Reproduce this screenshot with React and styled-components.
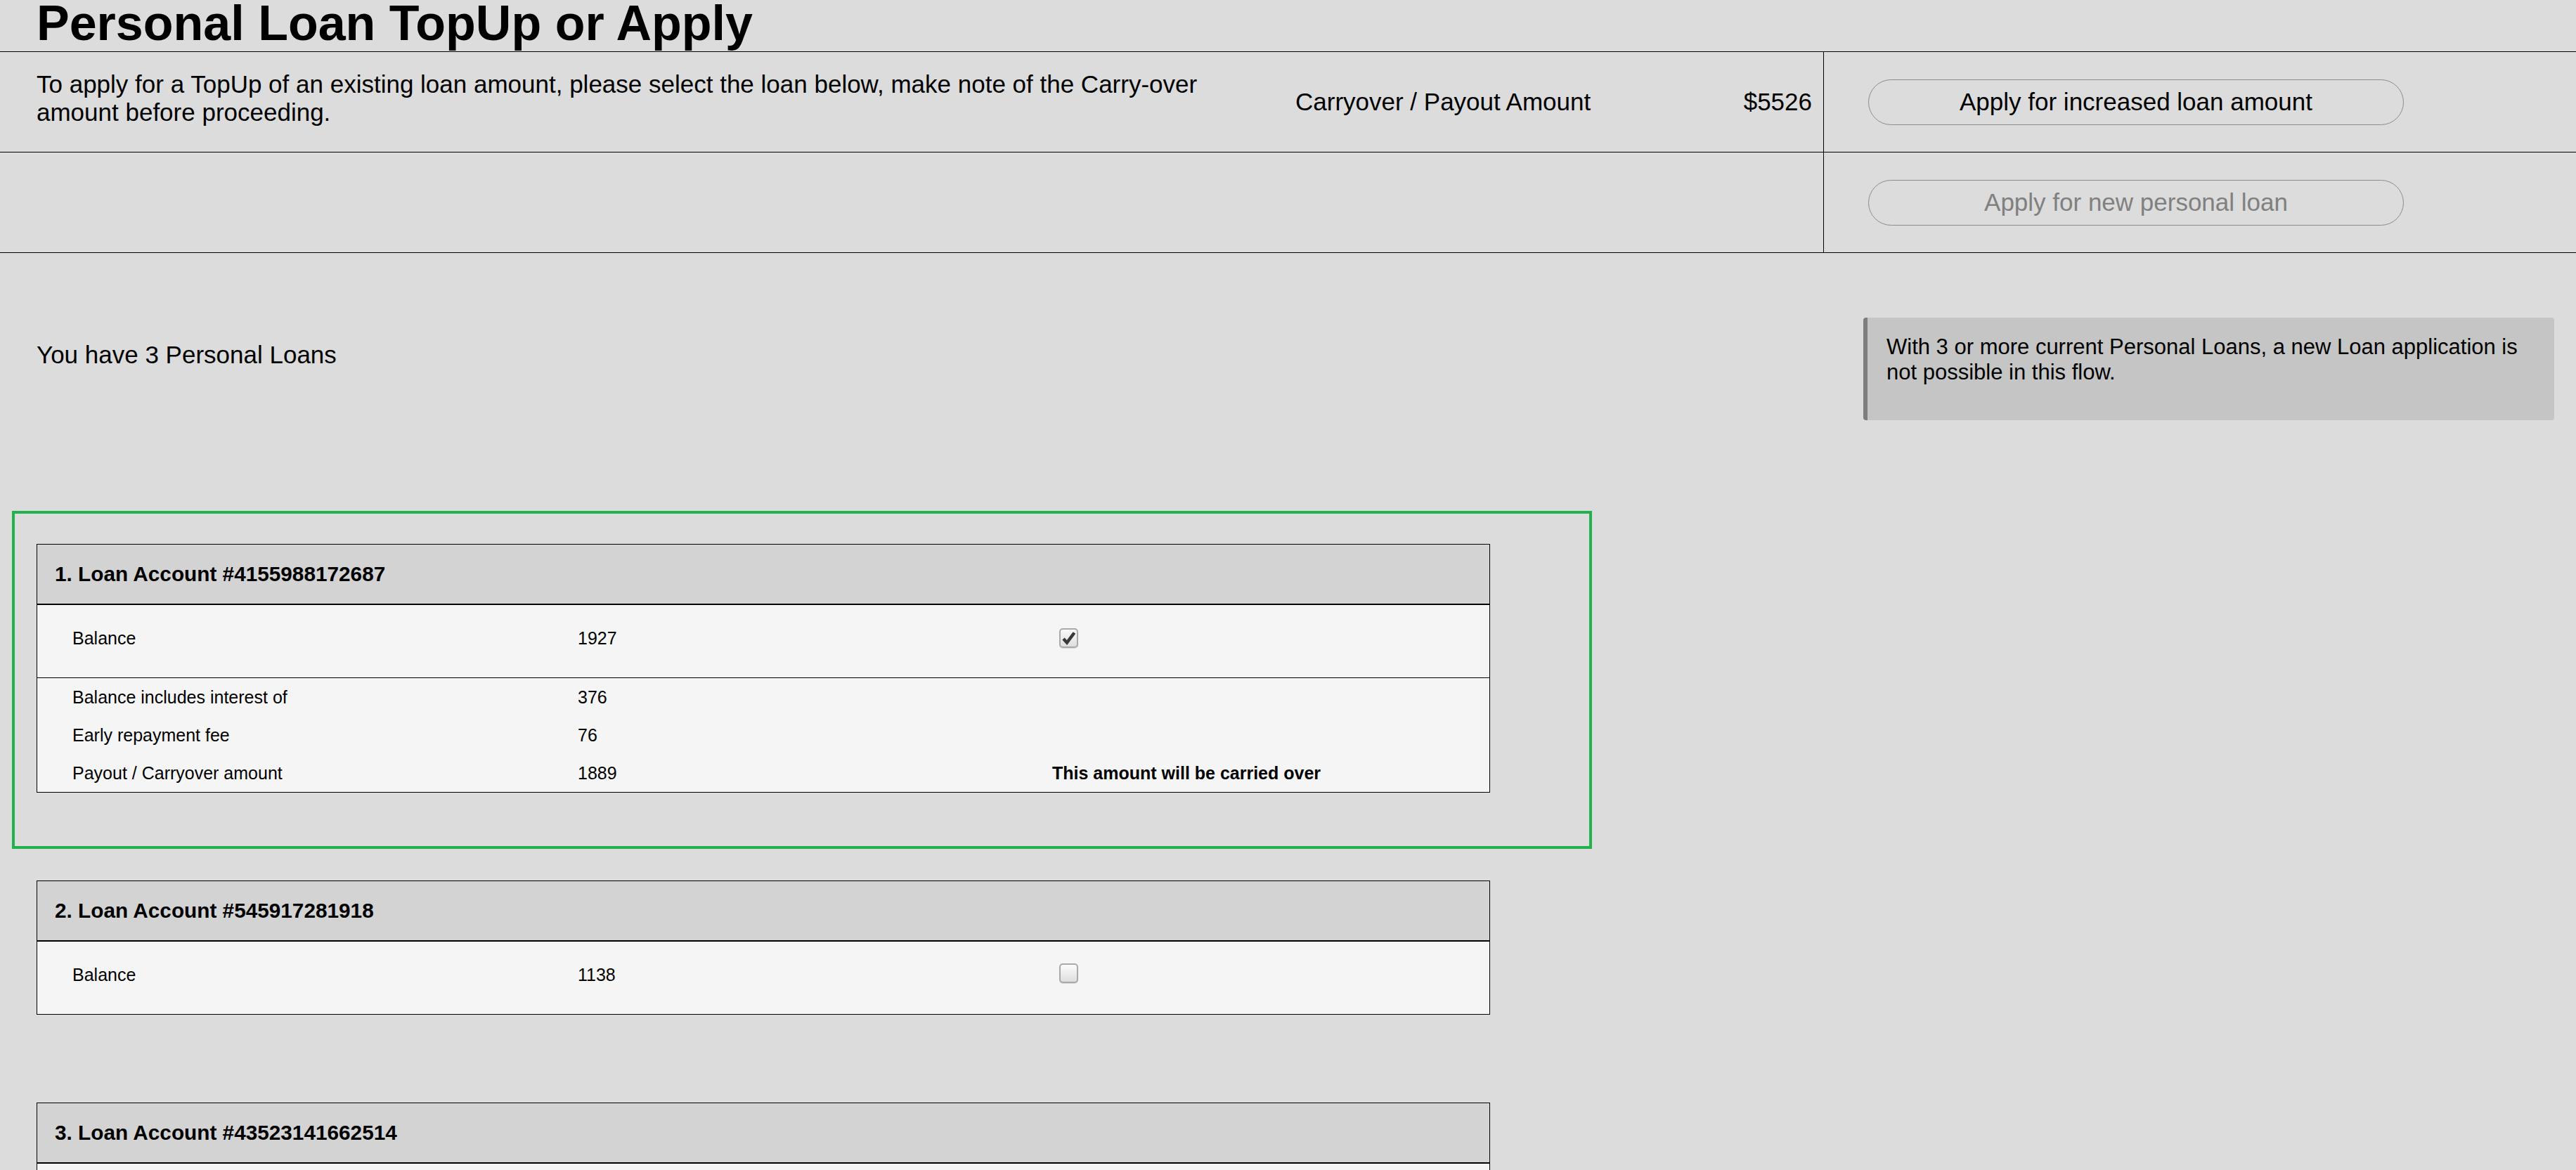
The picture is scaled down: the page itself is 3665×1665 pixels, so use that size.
import React from 'react'
import styled, { createGlobalStyle } from 'styled-components'

const GlobalStyle = createGlobalStyle`
  html, body {
    margin: 0;
    padding: 0;
    background: #dcdcdc;
  }
  body {
    font-family: "Liberation Sans", Arial, sans-serif;
    font-size: 35px;
    color: #000;
  }
  * {
    box-sizing: border-box;
  }
`

const Title = styled.h1`
  margin: 0;
  height: 74px;
  padding: 0 0 7px 52px;
  font-size: 70px;
  line-height: 66px;
  font-weight: 700;
  border-bottom: 1px solid #000;
`

const TopRow = styled.div`
  display: flex;
  height: 143px;
  border-bottom: 1px solid #000;
`

const InfoCell = styled.div`
  width: 2594px;
  flex-shrink: 0;
  display: flex;
  align-items: center;
  padding: 0 16px 0 52px;
`

const Intro = styled.p`
  margin: 0;
  width: 1700px;
  padding-bottom: 11px;
`

const AmountLabel = styled.span`
  margin-left: 91px;
`

const Amount = styled.span`
  margin-left: auto;
`

const ActionCell = styled.div`
  flex: 1;
  border-left: 1px solid #000;
  display: flex;
  align-items: center;
  padding-left: 63px;
`

const PillButton = styled.button`
  width: 762px;
  height: 65px;
  padding: 0;
  border: 1px solid #8c8c8c;
  border-radius: 33px;
  background: transparent;
  font: inherit;
  color: ${p => (p.disabled ? '#808080' : '#000')};
  cursor: ${p => (p.disabled ? 'default' : 'pointer')};
`

const Summary = styled.div`
  display: flex;
  align-items: flex-start;
  justify-content: space-between;
  padding: 0 31px 129px 52px;
`

const LoanCount = styled.p`
  margin: 125px 0 0;
`

const Notice = styled.div`
  margin-top: 92px;
  width: 983px;
  height: 146px;
  padding: 24px 27px 0;
  background: #c4c5c4;
  border-left: 6px solid #7d7d7d;
  border-radius: 4px;
  font-size: 31px;
`

const LoanSlot = styled.section`
  width: 2248px;
  margin-left: 17px;
  border: 4px solid ${p => (p.$selected ? '#22b14c' : 'transparent')};
  padding: ${p => (p.$selected ? '43px' : '41px')} 141px 76px 31px;
`

const Card = styled.div`
  border: 1px solid #000;
  background: #f5f5f5;
`

const CardHeader = styled.h2`
  margin: 0;
  height: 86px;
  display: flex;
  align-items: center;
  padding-left: 25px;
  background: #d3d3d3;
  border-bottom: 2px solid #000;
  font-size: 29.75px;
  font-weight: 700;
`

const Row = styled.div`
  display: grid;
  grid-template-columns: 719px 675px 1fr;
  align-items: center;
  height: ${p => (p.$main ? '103px' : '54px')};
  padding: ${p => (p.$main ? '0 0 8px 50px' : '0 0 0 50px')};
  font-size: 25px;
`

const Details = styled.div`
  border-top: 1px solid #000;
`

const Note = styled.span`
  font-weight: 700;
`

const Box = styled.span`
  display: inline-flex;
  align-items: center;
  justify-content: center;
  width: 27px;
  height: 28px;
  margin-left: 10px;
  border: 2px solid #a9a9a9;
  border-radius: 5px;
  background: linear-gradient(#fbfbfb, #dedede);
  box-shadow: 0 1px 0 #d8d8d8;
`

const Checkbox = ({ checked }) => (
  <Box role="checkbox" aria-checked={checked}>
    {checked && (
      <svg width="20" height="20" viewBox="0 0 20 20">
        <path d="M2 11 L7 16.5 L17.5 2.5" fill="none" stroke="#3a3a3a" strokeWidth="4.5" strokeLinejoin="miter" />
      </svg>
    )}
  </Box>
)

const loans = [
  { id: '4155988172687', balance: 1927, interest: 376, fee: 76, payout: 1889, selected: true },
  { id: '545917281918', balance: 1138 },
  { id: '43523141662514', balance: 2214 },
]

const LoanCard = ({ loan, index }) => (
  <LoanSlot $selected={loan.selected}>
    <Card>
      <CardHeader>{index + 1}. Loan Account #{loan.id}</CardHeader>
      <Row $main>
        <span>Balance</span>
        <span>{loan.balance}</span>
        <span>
          <Checkbox checked={!!loan.selected} />
        </span>
      </Row>
      {loan.selected && (
        <Details>
          <Row>
            <span>Balance includes interest of</span>
            <span>{loan.interest}</span>
            <span />
          </Row>
          <Row>
            <span>Early repayment fee</span>
            <span>{loan.fee}</span>
            <span />
          </Row>
          <Row>
            <span>Payout / Carryover amount</span>
            <span>{loan.payout}</span>
            <Note>This amount will be carried over</Note>
          </Row>
        </Details>
      )}
    </Card>
  </LoanSlot>
)

export default function App() {
  return (
    <>
      <GlobalStyle />
      <Title>Personal Loan TopUp or Apply</Title>
      <TopRow>
        <InfoCell>
          <Intro>
            To apply for a TopUp of an existing loan amount, please select the loan below, make note of the Carry-over amount before proceeding.
          </Intro>
          <AmountLabel>Carryover / Payout Amount</AmountLabel>
          <Amount>$5526</Amount>
        </InfoCell>
        <ActionCell>
          <PillButton>Apply for increased loan amount</PillButton>
        </ActionCell>
      </TopRow>
      <TopRow>
        <InfoCell />
        <ActionCell>
          <PillButton disabled>Apply for new personal loan</PillButton>
        </ActionCell>
      </TopRow>
      <Summary>
        <LoanCount>You have 3 Personal Loans</LoanCount>
        <Notice>With 3 or more current Personal Loans, a new Loan application is not possible in this flow.</Notice>
      </Summary>
      {loans.map((loan, i) => (
        <LoanCard key={loan.id} loan={loan} index={i} />
      ))}
    </>
  )
}
